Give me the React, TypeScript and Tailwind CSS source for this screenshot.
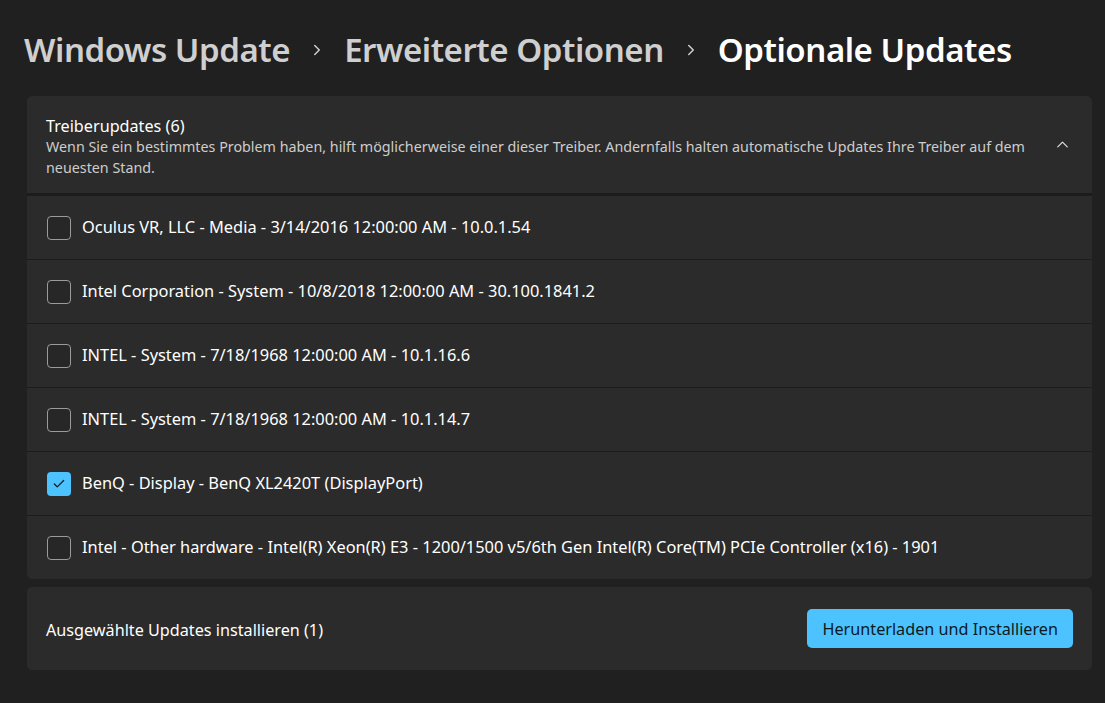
import { ChevronRight, ChevronUp, Check } from "lucide-react";

const drivers = [
    { label: "Oculus VR, LLC - Media - 3/14/2016 12:00:00 AM - 10.0.1.54", checked: false },
    { label: "Intel Corporation - System - 10/8/2018 12:00:00 AM - 30.100.1841.2", checked: false },
    { label: "INTEL - System - 7/18/1968 12:00:00 AM - 10.1.16.6", checked: false },
    { label: "INTEL - System - 7/18/1968 12:00:00 AM - 10.1.14.7", checked: false },
    { label: "BenQ - Display - BenQ XL2420T (DisplayPort)", checked: true },
    {
        label: "Intel - Other hardware - Intel(R) Xeon(R) E3 - 1200/1500 v5/6th Gen Intel(R) Core(TM) PCIe Controller (x16) - 1901",
        checked: false,
    },
];

const CheckBox = ({ checked }: { checked: boolean }) =>
    checked ? (
        <span className="flex h-6 w-6 shrink-0 items-center justify-center rounded-[4px] bg-[#4cc2ff]">
            <Check size={14} strokeWidth={2.2} className="text-[#1a1a1a]" />
        </span>
    ) : (
        <span className="block h-6 w-6 shrink-0 rounded-[4px] border border-[#9b9b9b] bg-[#272727]" />
    );

const App = () => {
    return (
        <div className="h-[703px] w-[1105px] overflow-hidden bg-[#202020] font-['Noto_Sans','Open_Sans',sans-serif] text-white">
            {/* Breadcrumb */}
            <div className="flex h-[96px] items-center pl-6 pt-[4px] text-[33px] font-semibold tracking-[-0.45px]">
                <span className="text-[#cfcfcf]">Windows Update</span>
                <ChevronRight size={18} strokeWidth={2} className="mx-[18px] text-[#cfcfcf]" />
                <span className="text-[#cfcfcf]">Erweiterte Optionen</span>
                <ChevronRight size={18} strokeWidth={2} className="mx-[18px] text-[#cfcfcf]" />
                <span className="text-white">Optionale Updates</span>
            </div>

            <div className="flex w-[1092px] flex-col pl-[27px]">
                {/* Driver updates expander */}
                <div className="overflow-hidden rounded-[5px] bg-[#1c1c1c]">
                    <div className="flex h-[97px] items-center bg-[#2b2b2b] pl-[19px] pr-[20px]">
                        <div className="flex-1 pt-[5px]">
                            <div className="text-[16.2px] leading-[20px] text-white">Treiberupdates (6)</div>
                            <div className="w-[990px] text-[14.3px] leading-[21px] text-[#cdcdcd]">
                                Wenn Sie ein bestimmtes Problem haben, hilft möglicherweise einer dieser Treiber. Andernfalls
                                halten automatische Updates Ihre Treiber auf dem neuesten Stand.
                            </div>
                        </div>
                        <ChevronUp size={19} strokeWidth={1.5} className="text-[#e0e0e0]" />
                    </div>
                    <div className="mt-[3px] flex flex-col gap-[1px]">
                        {drivers.map((d) => (
                            <div key={d.label} className="flex h-[63px] items-center gap-[11px] bg-[#2b2b2b] pl-[20px]">
                                <CheckBox checked={d.checked} />
                                <span className="text-[16.4px] text-white">{d.label}</span>
                            </div>
                        ))}
                    </div>
                </div>

                {/* Install footer */}
                <div className="mt-[8px] flex h-[83px] items-center justify-between rounded-[5px] bg-[#2b2b2b] pl-[19px] pr-[19px]">
                    <span className="pt-[4px] text-[16.2px] text-white">Ausgewählte Updates installieren (1)</span>
                    <button className="h-[39px] rounded-[5px] bg-[#4cc2ff] px-[15px] pt-[2px] text-[16.2px] text-[#0b1a24]">
                        Herunterladen und Installieren
                    </button>
                </div>
            </div>
        </div>
    );
};

export default App;
